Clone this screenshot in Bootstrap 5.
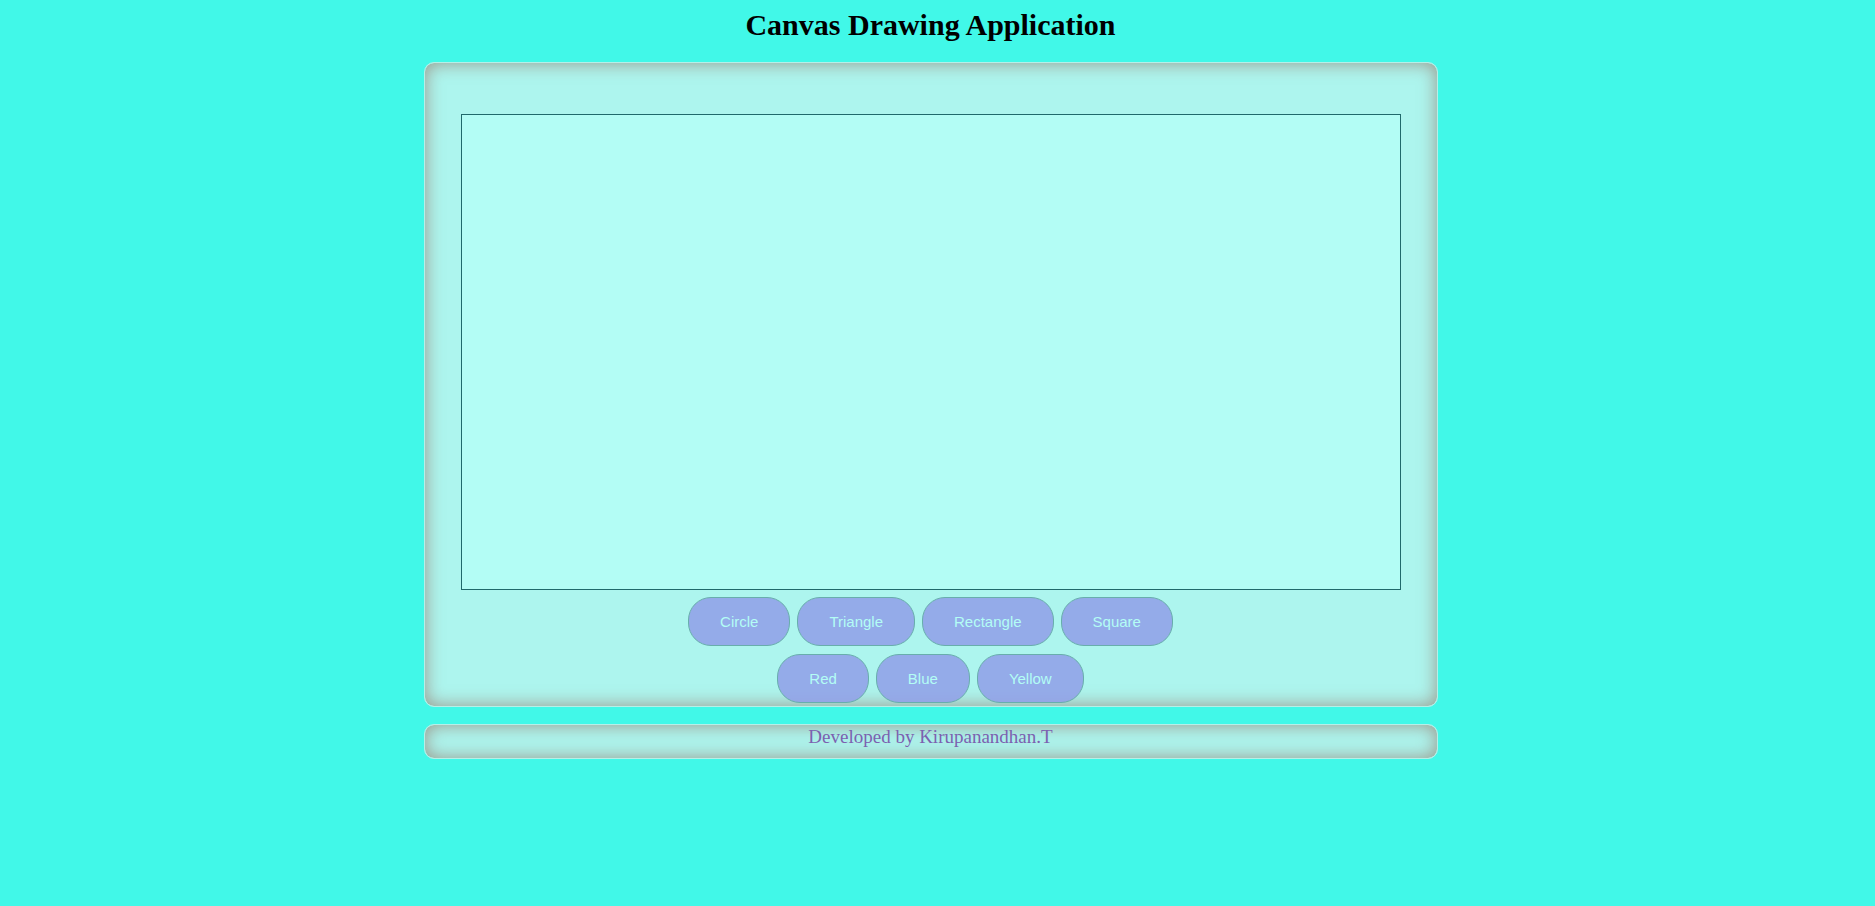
<!DOCTYPE html>
<html lang="en">
<head>
<meta charset="utf-8">
<meta name="viewport" content="width=device-width, initial-scale=1">
<title>Canvas Drawing Application</title>
<link href="https://cdn.jsdelivr.net/npm/bootstrap@5.3.0/dist/css/bootstrap.min.css" rel="stylesheet">
<style>
body { background: #41f8e8; font-family: "Liberation Serif", "Times New Roman", serif; padding-right: 14px; }
.page-title { font-size: 30px; line-height: 34px; color: #000; padding: 8px 0 20px; }
.panel { max-width: 1014px; background: #adf5ee; border: 1px solid #b5f0e8; border-radius: 10px; box-shadow: inset 0 0 18px rgba(150, 115, 100, .75); }
.board { padding: 51px 36px 3px; }
.board canvas { height: 476px; margin-bottom: 7px; background: #b3fdf5; border: 1px solid #20696b; }
.tools { gap: 7px; }
.tool { font: 15px/17px "Liberation Sans", Arial, sans-serif; color: #b3fdf5; background: rgba(145, 160, 232, .87); border: 1px solid #68aeac; border-radius: 23px; padding: 15px 31px; }
.tool:hover { color: #fff; background: #8297e2; }
.credit { height: 35px; font-size: 19px; line-height: 24px; color: #7c61b0; margin-top: 17px; }
</style>
</head>
<body>
<h1 class="page-title text-center fw-bold m-0">Canvas Drawing Application</h1>
<main class="panel board mx-auto">
  <canvas class="d-block w-100" width="938" height="474" aria-label="Drawing area"></canvas>
  <div class="tools d-flex flex-wrap justify-content-center mb-2">
    <button type="button" class="btn tool">Circle</button>
    <button type="button" class="btn tool">Triangle</button>
    <button type="button" class="btn tool">Rectangle</button>
    <button type="button" class="btn tool">Square</button>
  </div>
  <div class="tools d-flex flex-wrap justify-content-center">
    <button type="button" class="btn tool">Red</button>
    <button type="button" class="btn tool">Blue</button>
    <button type="button" class="btn tool">Yellow</button>
  </div>
</main>
<footer class="panel credit mx-auto text-center">Developed by Kirupanandhan.T</footer>
<script src="https://cdn.jsdelivr.net/npm/bootstrap@5.3.0/dist/js/bootstrap.bundle.min.js"></script>
</body>
</html>
